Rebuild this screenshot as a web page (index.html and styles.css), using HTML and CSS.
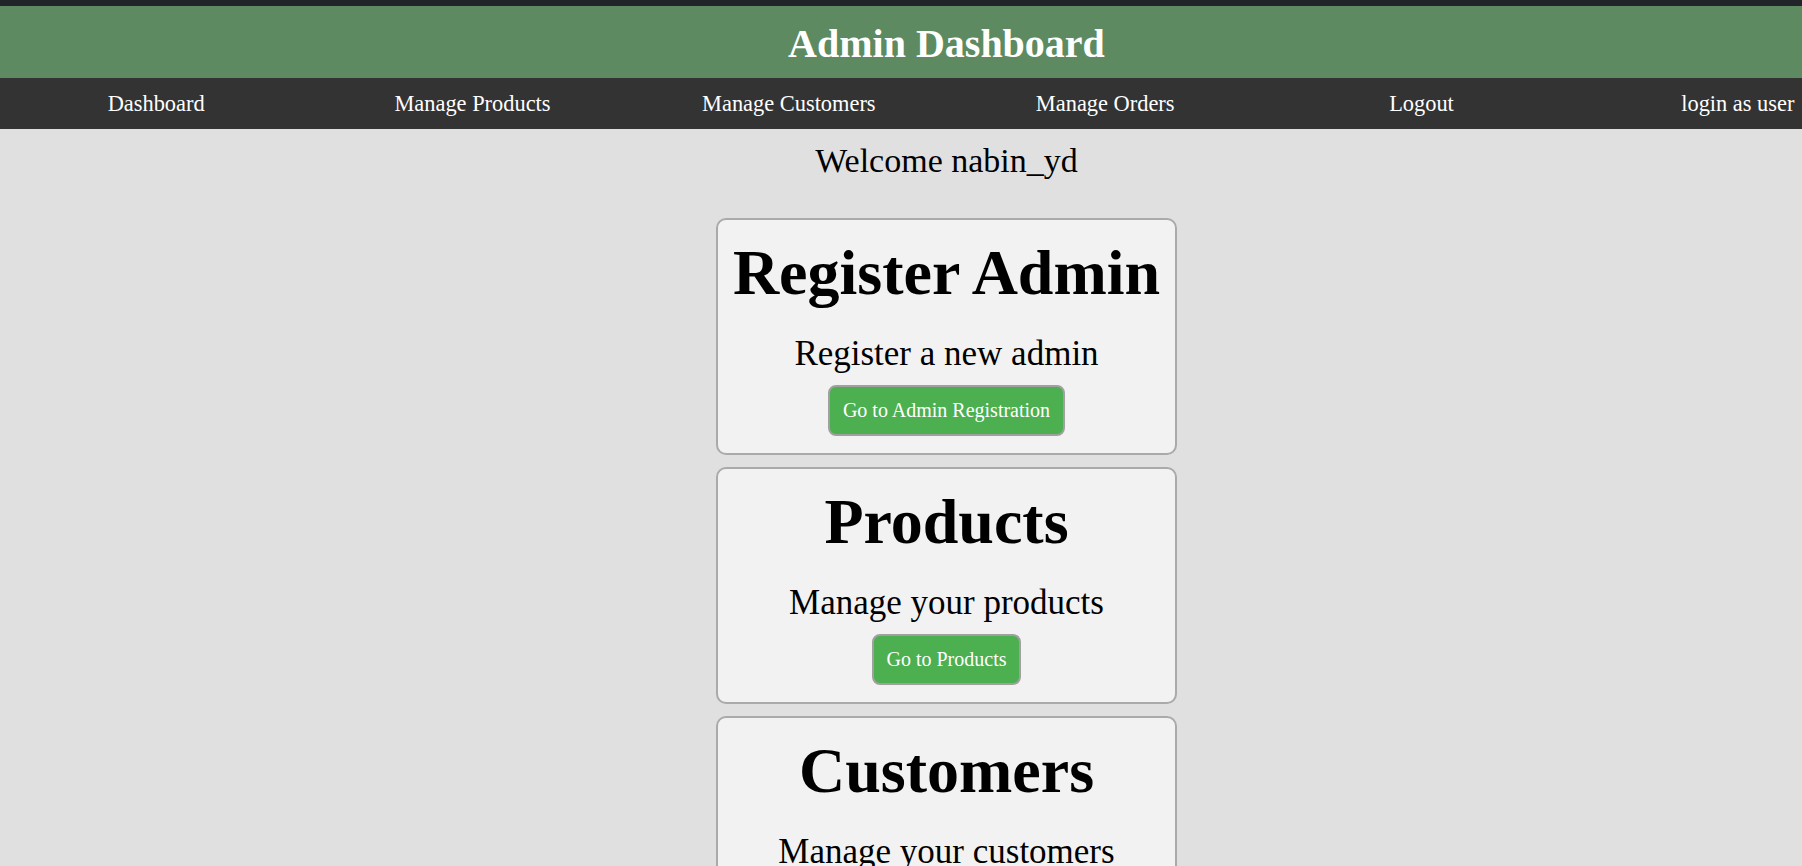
FILE: index.html
```html
<!DOCTYPE html>
<html lang="en">
<head>
<meta charset="utf-8">
<title>Admin Dashboard</title>
<link rel="stylesheet" href="styles.css">
</head>
<body>
<div class="topstrip"></div>
<div class="page">
  <header class="header">
    <h1 class="header-title">Admin Dashboard</h1>
  </header>
  <nav class="nav">
    <a class="nav-link" href="#">Dashboard</a>
    <a class="nav-link" href="#">Manage Products</a>
    <a class="nav-link" href="#">Manage Customers</a>
    <a class="nav-link" href="#">Manage Orders</a>
    <a class="nav-link" href="#">Logout</a>
    <a class="nav-link" href="#">login as user</a>
  </nav>
  <main class="main">
    <p class="welcome">Welcome nabin_yd</p>
    <div class="cards">
      <section class="card">
        <h2 class="card-title">Register Admin</h2>
        <p class="card-text">Register a new admin</p>
        <a class="card-btn" href="#">Go to Admin Registration</a>
      </section>
      <section class="card">
        <h2 class="card-title">Products</h2>
        <p class="card-text">Manage your products</p>
        <a class="card-btn" href="#">Go to Products</a>
      </section>
      <section class="card">
        <h2 class="card-title">Customers</h2>
        <p class="card-text">Manage your customers</p>
        <a class="card-btn" href="#">Go to Customers</a>
      </section>
    </div>
  </main>
</div>
</body>
</html>
```
FILE: styles.css
```css
html {
  overflow: hidden;
}
body {
  margin: 0;
  background: #e0e0e0;
  font-family: "Liberation Serif", "Times New Roman", serif;
  color: #000;
}
.topstrip {
  height: 6px;
  background: #212529;
}
.page {
  width: 1893px;
}
.header {
  height: 72px;
  background: #5d8a60;
  display: flex;
  align-items: center;
  justify-content: center;
}
.header-title {
  margin: 0;
  font-size: 40px;
  font-weight: bold;
  color: #fff;
  line-height: 46px;
  padding-top: 4px;
}
.nav {
  height: 51px;
  background: #333;
  display: grid;
  grid-template-columns: repeat(6, 1fr);
  align-items: center;
  margin: 0 -3px 0 -2px;
}
.nav-link {
  color: #fff;
  text-decoration: none;
  font-size: 22.4px;
  text-align: center;
}
.main {
  display: flex;
  flex-direction: column;
  align-items: center;
}
.welcome {
  margin: 13px 0 0;
  font-size: 34px;
}
.cards {
  margin-top: 38px;
  display: flex;
  flex-direction: column;
  gap: 12px;
}
.card {
  box-sizing: border-box;
  width: 461px;
  background: #f2f2f2;
  border: 2px solid #aaa;
  border-radius: 10px;
  padding: 16px 10px 17px;
  display: flex;
  flex-direction: column;
  align-items: center;
  text-align: center;
}
.card-title {
  margin: 0 0 24px;
  font-size: 64px;
  font-weight: bold;
  white-space: nowrap;
}
.card-text {
  margin: 0 0 11px;
  font-size: 35px;
}
.card-btn {
  box-sizing: border-box;
  height: 51px;
  display: inline-flex;
  align-items: center;
  padding: 0 12.5px;
  background: #4caf50;
  color: #fff;
  font-size: 20px;
  text-decoration: none;
  border: 2px solid #a0a0a0;
  border-radius: 8px;
}
```
